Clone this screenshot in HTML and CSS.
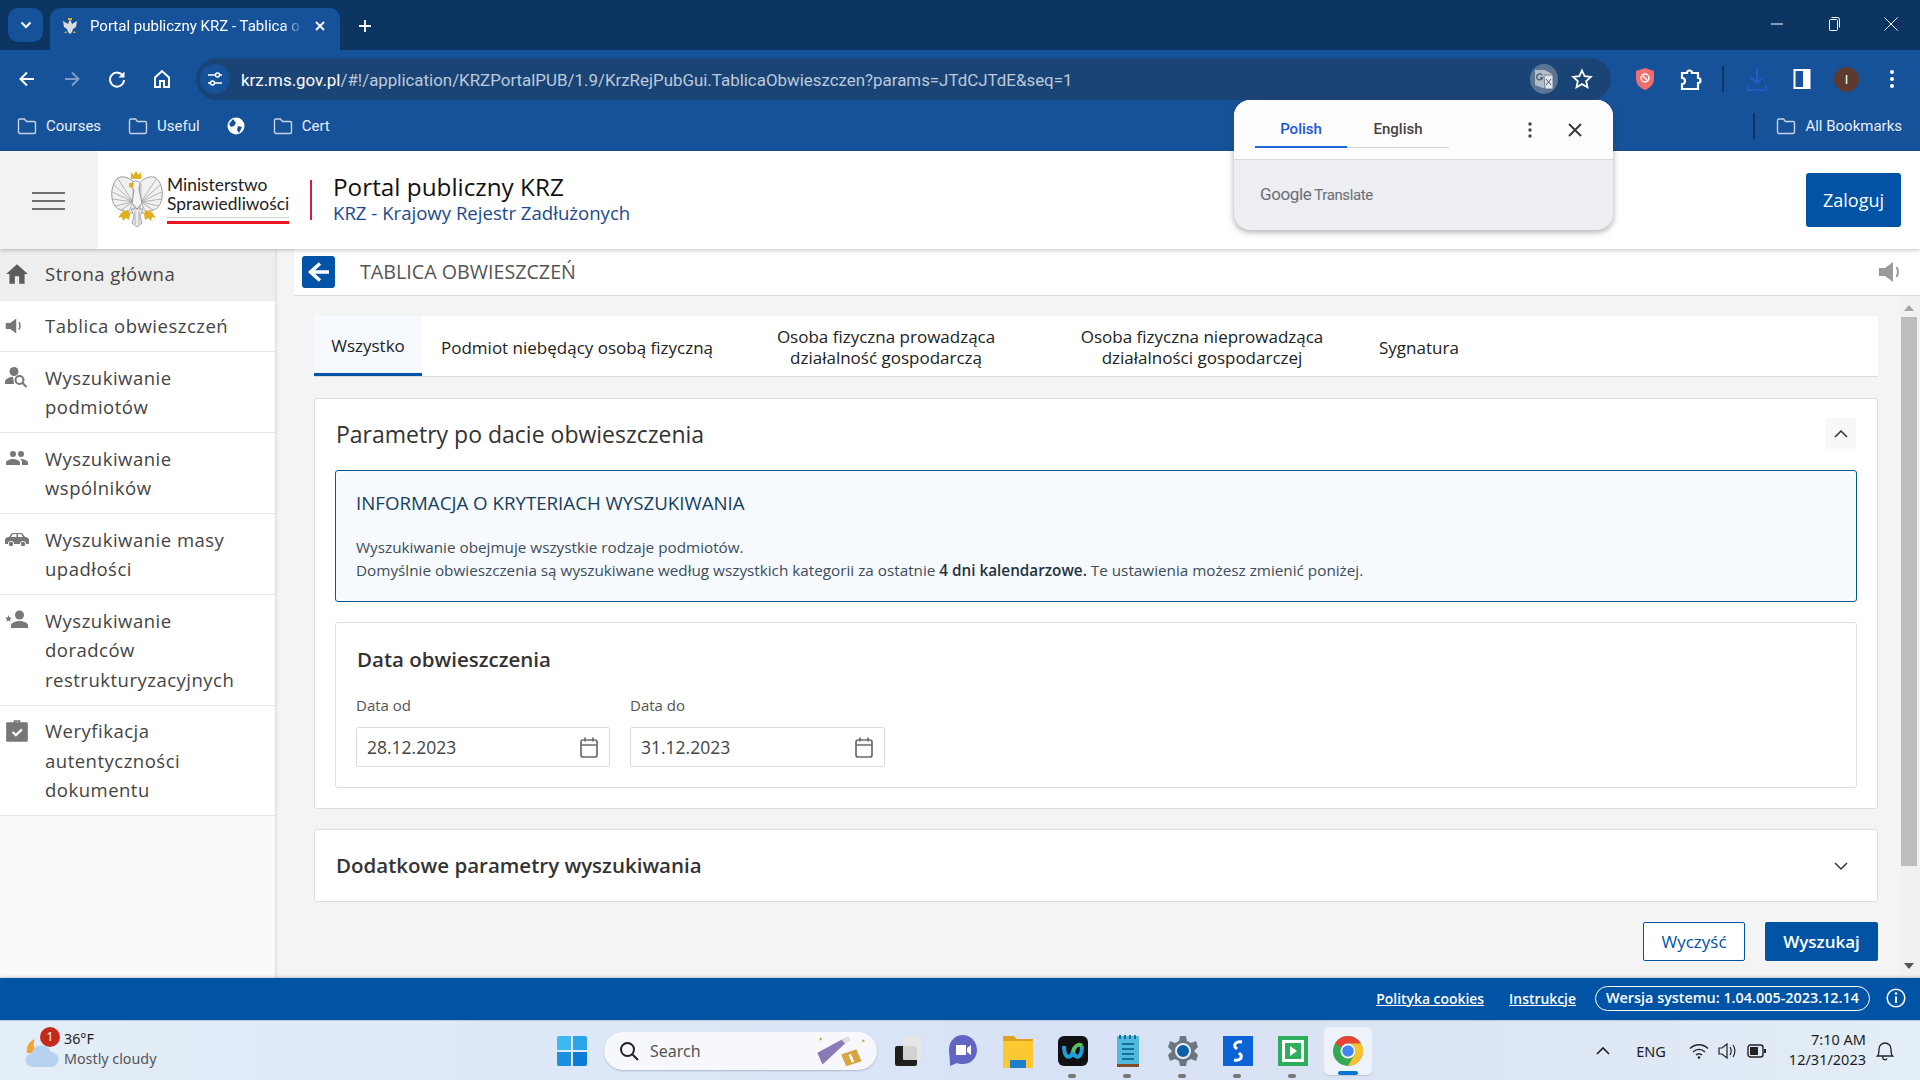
FILE: index.html
```html
<!DOCTYPE html>
<html lang="pl">
<head>
    <meta charset="UTF-8">
    <meta name="viewport" content="width=device-width, initial-scale=1.0">
    <title>Portal publiczny KRZ - Tablica obwieszczeń</title>
    <link rel="stylesheet" href="styles.css">
</head>
<body>
    <svg class="defs" width="0" height="0">
        <symbol id="folder" viewBox="0 0 20 18"><path d="M1.5 3.5A1.5 1.5 0 0 1 3 2h4.5l2 2.5H17A1.500 1.500 0 0 1 18.500 6v9a1.500 1.500 0 0 1-1.500 1.500H3A1.500 1.500 0 0 1 1.500 15z" fill="none" stroke="currentColor" stroke-width="1.4"/></symbol>
        <symbol id="speaker" viewBox="0 0 24 24"><path d="M1 8h6l8-6v20l-8-6H1z" fill="currentColor"/><path d="M18.5 7c1.800 3 1.800 7 0 10" fill="none" stroke="currentColor" stroke-width="2"/></symbol>
        <symbol id="calendar" viewBox="0 0 20 22"><path d="M2 6a2 2 0 0 1 2-2h12a2 2 0 0 1 2 2v13a2 2 0 0 1-2 2H4a2 2 0 0 1-2-2zM2 9h16M6 1.5v4M14 1.5v4" fill="none" stroke="#6b6b6b" stroke-width="1.7"/></symbol>
        <symbol id="wing" viewBox="0 0 26 44">
            <path d="M24 9C20 3 12 0 7 3 2 7 0 15 1 23c1 6 4 11 9 12l4 1 3 3 6-2z" fill="#f0f0f0" stroke="#8f8f8f" stroke-width=".9"/>
            <path d="M22 27 7 4M22 27 3 10M22 27 1.5 17M22 27 1.5 24M22 27 4 31M22 27 10 35M22 27 17 38M22 27V9" fill="none" stroke="#a3a3a3" stroke-width=".8"/>
        </symbol>
    </svg>

    <!-- browser chrome -->
    <div class="tabstrip">
        <div class="tab-search"><svg width="12" height="8" viewBox="0 0 12 8"><path d="M1.5 1.5 6 6l4.5-4.5" fill="none" stroke="#fff" stroke-width="2"/></svg></div>
        <div class="browser-tab">
            <svg class="fav" width="16" height="18" viewBox="0 0 16 18"><path d="M8 2 6 7 1 4l1 6 3 2 1 3 2 2 2-2 1-3 3-2 1-6-5 3z" fill="#dcdcdc"/><path d="M6 1h4v2H6zM4 14l-2 2h3zM12 14l2 2h-3z" fill="#e0b32c"/></svg>
            <span class="browser-tab-title">Portal publiczny KRZ - Tablica o</span>
            <svg width="12" height="12" viewBox="0 0 12 12"><path d="m2 2 8 8m0-8-8 8" stroke="#fff" stroke-width="1.8"/></svg>
        </div>
        <svg class="new-tab" width="14" height="14" viewBox="0 0 14 14"><path d="M7 1v12M1 7h12" stroke="#fff" stroke-width="1.8"/></svg>
        <div class="window-controls">
            <svg width="14" height="14" viewBox="0 0 14 14"><path d="M1 7h12" stroke="#fff"/></svg>
            <svg width="14" height="16" viewBox="0 0 14 16"><path d="M2.5 4.5a1 1 0 0 1 1-1h6a1 1 0 0 1 1 1v9a1 1 0 0 1-1 1h-6a1 1 0 0 1-1-1zM4.5 1.5h6a2 2 0 0 1 2 2v8" fill="none" stroke="#fff"/></svg>
            <svg width="14" height="14" viewBox="0 0 14 14"><path d="m.5.5 13 13m0-13-13 13" stroke="#fff"/></svg>
        </div>
    </div>

    <div class="toolbar">
        <div class="nav-buttons">
            <svg width="18" height="18" viewBox="0 0 18 18"><path d="M16 9H3m6-6.5L2.5 9 9 15.5" fill="none" stroke="#fff" stroke-width="2"/></svg>
            <svg width="18" height="18" viewBox="0 0 18 18"><path d="M2 9h13M9 2.5 15.5 9 9 15.5" fill="none" stroke="#7f9cc4" stroke-width="2"/></svg>
            <svg width="18" height="18" viewBox="0 0 18 18"><path d="M15 6a7 7 0 1 0 1 4" fill="none" stroke="#fff" stroke-width="2"/><path d="M16.5 1.5v6h-6z" fill="#fff"/></svg>
            <svg width="18" height="20" viewBox="0 0 18 20"><path d="M2 8.5 9 2l7 6.5V18h-5v-6H7v6H2z" fill="none" stroke="#fff" stroke-width="2"/></svg>
        </div>
        <div class="omnibox">
            <div class="site-chip"><svg width="16" height="16" viewBox="0 0 16 16"><path d="M1 4h7M13 4h2M1 12h2M8 12h7" stroke="#fff" stroke-width="1.5"/><circle cx="10.5" cy="4" r="2" fill="none" stroke="#fff" stroke-width="1.5"/><circle cx="5.5" cy="12" r="2" fill="none" stroke="#fff" stroke-width="1.5"/></svg></div>
            <div class="url"><span class="url-host">krz.ms.gov.pl</span>/#!/application/KRZPortalPUB/1.9/KrzRejPubGui.TablicaObwieszczen?params=JTdCJTdE&amp;seq=1</div>
            <div class="translate-chip"><svg width="20" height="22" viewBox="0 0 20 22"><path d="M1 2h10l7 4v13a1 1 0 0 1-1 1H9L1 17z" fill="#b5bdc9"/><path d="M10 7h9v14h-8z" fill="#dfe3ea" stroke="#5d6b7d" stroke-width=".8"/><path d="M8 7a3 3 0 1 0 .5 3H6" fill="none" stroke="#4e5a6b" stroke-width="1.3"/><path d="m12 11 5 6m0-6-5 6" stroke="#4e5a6b"/></svg></div>
            <svg class="star" width="22" height="22" viewBox="0 0 22 22"><path d="m11 2.5 2.6 5.7 6.200.7-4.600 4.200 1.300 6.100L11 16.100l-5.500 3.100 1.300-6.100-4.600-4.200 6.200-.7z" fill="none" stroke="#fff" stroke-width="1.8"/></svg>
        </div>
        <div class="ext-icons">
            <svg class="ext-shield" width="20" height="24" viewBox="0 0 20 24"><path d="M10 1 19 4v8c0 5-4 9-9 11-5-2-9-6-9-11V4z" fill="#f26d6d"/><circle cx="10" cy="11" r="4" fill="none" stroke="#fff" stroke-width="1.4"/><path d="m7.5 8.5 5 5" stroke="#fff" stroke-width="1.4"/></svg>
            <svg class="ext-puzzle" width="22" height="24" viewBox="0 0 22 24"><path d="M2 6h5a2.500 2.500 0 0 1 5 0h6v5a2.500 2.500 0 0 1 0 5v6H2v-5a2.500 2.500 0 0 0 0-6z" fill="none" stroke="#fff" stroke-width="2.2"/></svg>
            <span class="ext-sep"></span>
            <svg class="ext-download" width="22" height="26" viewBox="0 0 22 26"><path d="M11 2v15M4.500 11 11 17.500 17.500 11M2 19v5h18v-5" fill="none" stroke="#1d5cc0" stroke-width="2"/></svg>
            <svg class="ext-panel" width="18" height="22" viewBox="0 0 18 22"><path d="M1.5 2h15v18h-15z" fill="none" stroke="#fff" stroke-width="2"/><path d="M10 2h7v18h-7z" fill="#fff"/></svg>
            <div class="avatar">I</div>
            <svg class="ext-dots" width="6" height="20" viewBox="0 0 6 20"><circle cx="3" cy="3" r="2" fill="#fff"/><circle cx="3" cy="10" r="2" fill="#fff"/><circle cx="3" cy="17" r="2" fill="#fff"/></svg>
        </div>
    </div>

    <div class="bookmarks">
        <div class="bookmark"><svg class="bm-folder" width="20" height="18"><use href="#folder"/></svg>Courses</div>
        <div class="bookmark"><svg class="bm-folder" width="20" height="18"><use href="#folder"/></svg>Useful</div>
        <svg class="bm-globe" width="18" height="18" viewBox="0 0 18 18"><circle cx="9" cy="9" r="8.5" fill="#fff"/><path d="M6 2 9 6 7 9l-3 1-2-3zM11 9l4 1-3 6-2-3z" fill="#16529a"/></svg>
        <div class="bookmark"><svg class="bm-folder" width="20" height="18"><use href="#folder"/></svg>Cert</div>
        <span class="bm-sep"></span>
        <div class="bookmark bookmark-all"><svg class="bm-folder" width="20" height="18"><use href="#folder"/></svg>All Bookmarks</div>
    </div>

    <!-- translate popup sits over the page -->
    <div class="translate-popup">
        <div class="tp-top">
            <div class="tp-tabs">
                <span class="tp-tab tp-tab-active">Polish</span>
                <span class="tp-tab">English</span>
            </div>
            <svg class="tp-dots" width="4" height="16" viewBox="0 0 4 16"><circle cx="2" cy="2" r="1.7" fill="#444"/><circle cx="2" cy="8" r="1.7" fill="#444"/><circle cx="2" cy="14" r="1.7" fill="#444"/></svg>
            <svg class="tp-close" width="14" height="14" viewBox="0 0 14 14"><path d="m1 1 12 12m0-12L1 13" stroke="#333" stroke-width="1.8"/></svg>
        </div>
        <div class="tp-bottom"><span class="tp-google">Google</span> <span class="tp-translate">Translate</span></div>
    </div>

    <!-- app header -->
    <header class="app-header">
        <div class="menu-box">
            <span class="menu-line"></span>
            <span class="menu-line"></span>
            <span class="menu-line"></span>
        </div>
        <div class="logo">
            <svg class="eagle" width="52" height="56" viewBox="0 0 52 56">
                <use href="#wing" x="0" y="4" width="26" height="44"/>
                <use href="#wing" x="-52" y="4" width="26" height="44" transform="scale(-1 1)"/>
                <path d="M21 12c2-3 7-3 8 1l-1 5 3 14-5 6-5-6 2-13-3-4z" fill="#f4f4f4" stroke="#8f8f8f" stroke-width=".9"/>
                <path d="M20 38h12l-3 7 2 7-5 4-5-4 2-7z" fill="#ececec" stroke="#9a9a9a" stroke-width=".9"/>
                <path d="M24 40v13M28 40v13" stroke="#a3a3a3" stroke-width=".8"/>
                <path d="M20 1l2.5 3L25 0l2.5 4L30 1v7H20z" fill="#e3ae1e"/>
                <path d="M18 12h5l-1 5-4-1z" fill="#e3ae1e"/>
                <path d="M17 39l-6 2-4 6 4-1 1 4 3-3 3 2 1-6zM35 39l6 2 4 6-4-1-1 4-3-3-3 2-1-6z" fill="#e3ae1e"/>
            </svg>
            <div class="logo-side">
                <div class="logo-name">Ministerstwo<br>Sprawiedliwości</div>
                <div class="logo-rule"></div>
            </div>
        </div>
        <div class="portal-title">
            <div class="portal-name">Portal publiczny KRZ</div>
            <div class="portal-sub">KRZ - Krajowy Rejestr Zadłużonych</div>
        </div>
        <button class="btn-login">Zaloguj</button>
    </header>

    <div class="app-body">
        <nav class="sidebar">
            <a class="side-item side-item-active">
                <svg class="side-icon" width="26" height="26" viewBox="0 0 24 24"><path d="M10 21v-7h4v7h5v-9h3L12 3 2 12h3v9z" fill="#5c5c5c"/></svg>
                <span>Strona główna</span>
            </a>
            <a class="side-item">
                <svg class="side-icon side-icon-sm" width="18" height="18"><use href="#speaker"/></svg>
                <span>Tablica obwieszczeń</span>
            </a>
            <a class="side-item">
                <svg class="side-icon" width="24" height="24" viewBox="0 0 24 24"><circle cx="10" cy="6.5" r="4.5" fill="#777"/><path d="M1 19v-2c0-3 4-5 8-5l1 7z" fill="#777"/><circle cx="15.5" cy="15" r="4" fill="none" stroke="#777" stroke-width="2"/><path d="m18.5 18 4 4" stroke="#777" stroke-width="2"/></svg>
                <span>Wyszukiwanie<br>podmiotów</span>
            </a>
            <a class="side-item">
                <svg class="side-icon" width="26" height="24" viewBox="0 0 24 24"><path d="M16 11a3 3 0 1 0 0-6 3 3 0 0 0 0 6zm-8 0a3 3 0 1 0 0-6 3 3 0 0 0 0 6zm0 2c-2.300 0-7 1.200-7 3.500V19h14v-2.500c0-2.300-4.700-3.500-7-3.500zm8 0h-1c1.200.8 2 2 2 3.500V19h6v-2.500c0-2.300-4.700-3.500-7-3.500z" fill="#777"/></svg>
                <span>Wyszukiwanie<br>wspólników</span>
            </a>
            <a class="side-item">
                <svg class="side-icon" width="26" height="24" viewBox="0 0 26 24"><path d="M1 13c0-2 2-3 4-3l3-4h10l3 4c2 0 4 1 4 3v4h-3a3 3 0 0 0-6 0H10a3 3 0 0 0-6 0H1z" fill="#777"/><path d="M9 7h3.500v3H7zM14 7h3l2 3h-5z" fill="#fff"/><circle cx="7" cy="17" r="2.2" fill="#777"/><circle cx="19" cy="17" r="2.2" fill="#777"/></svg>
                <span>Wyszukiwanie masy<br>upadłości</span>
            </a>
            <a class="side-item">
                <svg class="side-icon" width="26" height="24" viewBox="0 0 26 24"><circle cx="15.5" cy="7" r="4.5" fill="#777"/><path d="M7 20v-2.5c0-3 5-4.5 8.500-4.500s8.500 1.500 8.500 4.500V20z" fill="#777"/><path d="m4.500 7 1 2.500 2.500.2-2 1.600.7 2.500-2.200-1.300-2.200 1.300.7-2.500-2-1.600 2.500-.2z" fill="#777"/></svg>
                <span>Wyszukiwanie<br>doradców<br>restrukturyzacyjnych</span>
            </a>
            <a class="side-item">
                <svg class="side-icon" width="26" height="26" viewBox="0 0 24 24"><path d="M9 4V2h6v2h6a1 1 0 0 1 1 1v16a1 1 0 0 1-1 1H3a1 1 0 0 1-1-1V5a1 1 0 0 1 1-1zm1.500 0h3V3.500h-3z" fill="#777"/><path d="m8 13 3 3 5.500-5.500" fill="none" stroke="#fff" stroke-width="2"/></svg>
                <span>Weryfikacja<br>autentyczności<br>dokumentu</span>
            </a>
        </nav>

        <main class="main">
            <div class="title-bar">
                <div class="back-btn"><svg width="24" height="22" viewBox="0 0 24 22"><path d="M22 11H5m8-8.500L3.500 11l9.500 8.500" fill="none" stroke="#fff" stroke-width="3.5"/></svg></div>
                <h1 class="page-title">TABLICA OBWIESZCZEŃ</h1>
                <svg class="title-speaker" width="24" height="24"><use href="#speaker"/></svg>
            </div>

            <div class="scroll-area">
                <div class="content">
                    <div class="tabs">
                        <div class="tab tab-active">Wszystko</div>
                        <div class="tab">Podmiot niebędący osobą fizyczną</div>
                        <div class="tab tab-wide">Osoba fizyczna prowadząca<br>działalność gospodarczą</div>
                        <div class="tab tab-wider">Osoba fizyczna nieprowadząca<br>działalności gospodarczej</div>
                        <div class="tab tab-last">Sygnatura</div>
                    </div>

                    <section class="card">
                        <div class="card-head">
                            <h2>Parametry po dacie obwieszczenia</h2>
                            <div class="chevron-box"><svg width="14" height="9" viewBox="0 0 14 9"><path d="m1 8 6-6 6 6" fill="none" stroke="#333" stroke-width="1.5"/></svg></div>
                        </div>
                        <div class="info-box">
                            <h3>INFORMACJA O KRYTERIACH WYSZUKIWANIA</h3>
                            <p>Wyszukiwanie obejmuje wszystkie rodzaje podmiotów.<br>Domyślnie obwieszczenia są wyszukiwane według wszystkich kategorii za ostatnie <strong>4 dni kalendarzowe.</strong> Te ustawienia możesz zmienić poniżej.</p>
                        </div>
                        <div class="date-box">
                            <h4>Data obwieszczenia</h4>
                            <div class="date-fields">
                                <div class="field">
                                    <label>Data od</label>
                                    <div class="date-input">28.12.2023<svg width="20" height="22"><use href="#calendar"/></svg></div>
                                </div>
                                <div class="field">
                                    <label>Data do</label>
                                    <div class="date-input">31.12.2023<svg width="20" height="22"><use href="#calendar"/></svg></div>
                                </div>
                            </div>
                        </div>
                    </section>

                    <section class="card card-closed">
                        <h2>Dodatkowe parametry wyszukiwania</h2>
                        <svg width="14" height="9" viewBox="0 0 14 9"><path d="m1 1 6 6 6-6" fill="none" stroke="#333" stroke-width="1.5"/></svg>
                    </section>

                    <div class="actions">
                        <button class="btn btn-outline">Wyczyść</button>
                        <button class="btn btn-primary">Wyszukaj</button>
                    </div>
                </div>
                <div class="scrollbar">
                    <span class="arrow-up"></span>
                    <span class="thumb"></span>
                    <span class="arrow-down"></span>
                </div>
            </div>
        </main>
    </div>

    <footer class="app-footer">
        <a class="foot-link">Polityka cookies</a>
        <a class="foot-link">Instrukcje</a>
        <span class="version">Wersja systemu: 1.04.005-2023.12.14</span>
        <svg width="20" height="20" viewBox="0 0 20 20"><circle cx="10" cy="10" r="8.8" fill="none" stroke="#fff" stroke-width="1.6"/><path d="M10 8.500V15" stroke="#fff" stroke-width="2"/><circle cx="10" cy="5.5" r="1.3" fill="#fff"/></svg>
    </footer>

    <!-- windows taskbar -->
    <div class="taskbar">
        <div class="weather">
            <div class="weather-icon">
                <svg width="34" height="38" viewBox="0 0 34 38"><path d="M10 8a10 10 0 0 0 4 14H2A12 12 0 0 1 10 8z" fill="#f2a431"/><path d="M8 36a7 7 0 0 1-1-14 10 10 0 0 1 19-1 7.500 7.500 0 0 1 0 15z" fill="#b7d2f0"/></svg>
                <span class="weather-badge">1</span>
            </div>
            <div class="weather-text">
                <div>36°F</div>
                <div class="weather-desc">Mostly cloudy</div>
            </div>
        </div>
        <svg class="win-logo" width="30" height="30" viewBox="0 0 30 30"><path d="M0 2a2 2 0 0 1 2-2h12v14H0z" fill="#3fb7f0"/><path d="M16 0h12a2 2 0 0 1 2 2v12H16z" fill="#2aa5ea"/><path d="M0 16h14v14H2a2 2 0 0 1-2-2z" fill="#1b8fe0"/><path d="M16 16h14v12a2 2 0 0 1-2 2H16z" fill="#0e7cd6"/></svg>
        <div class="task-search">
            <svg width="20" height="20" viewBox="0 0 20 20"><circle cx="8.5" cy="8.5" r="6.5" fill="none" stroke="#222" stroke-width="2"/><path d="m13 13 6 6" stroke="#222" stroke-width="2"/></svg>
            <span>Search</span>
            <svg class="candy" width="62" height="34" viewBox="0 0 62 40"><path d="M2 22 32 6l3 5L8 36z" fill="#8b7ab8"/><path d="M30 6l9-3 2 5-7 3z" fill="#ddd"/><path d="M30 24l18-6 6 14-18 6z" fill="#d8a544"/><path d="m40 24 4 9" stroke="#fff" stroke-width="3"/><circle cx="6" cy="6" r="1.5" fill="#d8a544"/><circle cx="56" cy="8" r="1.5" fill="#d8a544"/></svg>
        </div>
        <div class="task-app"><svg width="26" height="30" viewBox="0 0 26 30"><rect y="10" width="22" height="20" rx="2" fill="#1f1f1f"/><rect x="8" width="18" height="24" rx="1" fill="#e6e6e6" opacity=".9"/></svg></div>
        <div class="task-app"><svg width="30" height="34" viewBox="0 0 30 34"><path d="M15 1C7 1 1 7 1 16c0 4 1 8 1 16l7-3c2 1 4 1 6 1 8 0 14-6 14-14S23 1 15 1z" fill="#6264c4"/><path d="M8 11h10v10H8zM19 14l4-3v10l-4-3z" fill="#fff"/></svg></div>
        <div class="task-app"><svg width="30" height="34" viewBox="0 0 30 34"><path d="M0 2h11l3 3h16v4H0z" fill="#e0a020"/><path d="M0 7h30v27H0z" fill="#fcc933"/><rect x="7" y="26" width="16" height="8" rx="1" fill="#1b7fcc"/></svg></div>
        <div class="task-app task-running"><svg width="30" height="30" viewBox="0 0 30 30"><rect width="30" height="30" rx="6" fill="#111"/><path d="M6 10c0 12 6 14 9 6 3 8 9 6 9-6" fill="none" stroke="#1f9fd8" stroke-width="4"/><path d="M15 16c2-8 7-8 9-6" fill="none" stroke="#58c25a" stroke-width="4"/></svg></div>
        <div class="task-app task-running"><svg width="22" height="32" viewBox="0 0 22 32"><rect y="1" width="22" height="31" rx="1" fill="#53b9dc"/><path d="M0 29h22v3H0z" fill="#80502a"/><path d="M5 9h12M5 14h12M5 19h12M5 24h12" stroke="#166f96" stroke-width="2"/><path d="M3 0v4M8 0v4M13 0v4M18 0v4" stroke="#166f96" stroke-width="2"/></svg></div>
        <div class="task-app task-running"><svg width="30" height="30" viewBox="0 0 30 30"><path d="M12 0h6l1 5 4 2 5-2 2 6-4 4 4 4-2 6-5-2-4 2-1 5h-6l-1-5-4-2-5 2-2-6 4-4-4-4 2-6 5 2 4-2z" fill="#6c7680"/><circle cx="15" cy="15" r="7" fill="#0d5fa8" stroke="#e9eef5" stroke-width="2"/></svg></div>
        <div class="task-app task-running"><svg width="30" height="30" viewBox="0 0 30 30"><rect width="30" height="30" fill="#0b63d6"/><path d="M19 6c-6-1-8 2-7 5l2 2M11 24c6 1 8-2 7-5l-2-2" fill="none" stroke="#fff" stroke-width="3"/></svg></div>
        <div class="task-app task-running"><svg width="30" height="30" viewBox="0 0 30 30"><rect width="30" height="30" fill="#2ead5c"/><rect x="4" y="4" width="22" height="22" fill="#fff"/><rect x="7" y="7" width="16" height="16" fill="#2ead5c"/><path d="M12 10v10l7-5z" fill="#fff"/></svg></div>
        <div class="task-app task-chrome">
            <svg width="30" height="30" viewBox="0 0 30 30"><circle cx="15" cy="15" r="15" fill="#34a853"/><path d="M15 0a15 15 0 0 1 13 7.500H15a7.500 7.500 0 0 0-6.500 3.750L2 7.500A15 15 0 0 1 15 0z" fill="#ea4335"/><path d="M28 7.500A15 15 0 0 1 15 30l6.500-11.250A7.500 7.500 0 0 0 15 7.500z" fill="#fbc02d"/><circle cx="15" cy="15" r="7.5" fill="#fff"/><circle cx="15" cy="15" r="5.8" fill="#4285f4"/></svg>
            <span class="chrome-bar"></span>
        </div>
        <div class="tray">
            <svg class="tray-caret" width="14" height="9" viewBox="0 0 14 9"><path d="m1 8 6-6 6 6" fill="none" stroke="#222" stroke-width="1.6"/></svg>
            <span class="tray-lang">ENG</span>
            <svg width="20" height="16" viewBox="0 0 20 16"><path d="M1 5.500c5-5 13-5 18 0M4 9c3.500-3.500 8.500-3.500 12 0M7 12c1.700-1.500 4.300-1.500 6 0" fill="none" stroke="#222" stroke-width="1.4"/><circle cx="10" cy="14.5" r="1.3" fill="#222"/></svg>
            <svg width="20" height="18" viewBox="0 0 20 18"><path d="M1 6h3l5-4v14l-5-4H1zM12 5c1.500 2.500 1.500 5.500 0 8M15 3c2.500 3.500 2.500 8.500 0 12" fill="none" stroke="#222" stroke-width="1.2"/></svg>
            <svg width="20" height="14" viewBox="0 0 20 14"><rect x="1" y="1" width="15" height="12" rx="2.5" fill="none" stroke="#222" stroke-width="1.4"/><rect x="3" y="3" width="8" height="8" fill="#222"/><rect x="17" y="5" width="2" height="4" fill="#222"/></svg>
            <div class="clock">7:10 AM<br>12/31/2023</div>
            <svg width="18" height="20" viewBox="0 0 18 20"><path d="M1.500 15c1.500-1.500 1.500-3 1.500-7a6 6 0 0 1 12 0c0 4 0 5.500 1.500 7zM7 15.500a2 2 0 0 0 4 2" fill="none" stroke="#222" stroke-width="1.3"/></svg>
        </div>
    </div>
</body>
</html>
```

FILE: styles.css
```css
* {
    box-sizing: border-box;
}

html, body {
    margin: 0;
    padding: 0;
    height: 100%;
}

body {
    width: 1920px;
    height: 1080px;
    display: flex;
    flex-direction: column;
    overflow: hidden;
    position: relative;
    font-family: "Open Sans", sans-serif;
    color: #333;
    background: #f4f4f4;
}

.defs {
    position: absolute;
}

h1, h2, h3, h4, p {
    margin: 0;
}

svg {
    flex: none;
}

/* browser chrome */
.tabstrip {
    height: 50px;
    flex: none;
    display: flex;
    align-items: flex-end;
    background: #0d3562;
    font-family: Roboto, sans-serif;
}

.tab-search {
    width: 35px;
    height: 34px;
    margin: 0 7px 8px 8px;
    border-radius: 10px;
    background: #16529a;
    display: flex;
    align-items: center;
    justify-content: center;
}

.browser-tab {
    width: 290px;
    height: 42px;
    padding: 0 14px 6px 12px;
    display: flex;
    align-items: center;
    border-radius: 10px 10px 0 0;
    background: #16529a;
    color: #fff;
    font-size: 15px;
}

.fav {
    margin-right: 12px;
}

.browser-tab-title {
    flex: 1;
    overflow: hidden;
    white-space: nowrap;
    -webkit-mask-image: linear-gradient(90deg, #000 86%, rgba(0, 0, 0, 0.15) 94%);
    mask-image: linear-gradient(90deg, #000 86%, rgba(0, 0, 0, 0.15) 94%);
}

.new-tab {
    margin: 0 0 17px 18px;
}

.window-controls {
    margin-left: auto;
    width: 150px;
    height: 50px;
    padding: 0 22px 2px 0;
    display: flex;
    align-items: center;
    justify-content: space-between;
}

.toolbar {
    height: 50px;
    flex: none;
    display: flex;
    align-items: flex-start;
    padding-top: 8px;
    background: #16529a;
    font-family: Roboto, sans-serif;
}

.nav-buttons {
    width: 196px;
    height: 42px;
    padding: 0 25px 0 18px;
    display: flex;
    align-items: center;
    justify-content: space-between;
}

.omnibox {
    width: 1415px;
    height: 42px;
    display: flex;
    align-items: center;
    border-radius: 21px;
    background: #1b4476;
    padding: 0 18px 0 4px;
    color: #bcc9da;
    font-size: 16.9px;
}

.site-chip {
    width: 30px;
    height: 30px;
    margin-right: 11px;
    border-radius: 50%;
    background: #16529a;
    display: flex;
    align-items: center;
    justify-content: center;
}

.url {
    flex: 1;
    white-space: nowrap;
    padding-top: 1px;
}

.url-host {
    color: #fff;
}

.translate-chip {
    width: 28px;
    height: 30px;
    margin-right: 13px;
    border-radius: 50%;
    background: #5b7694;
    display: flex;
    align-items: center;
    justify-content: center;
}

.ext-icons {
    flex: 1;
    height: 42px;
    padding-left: 24px;
    display: flex;
    align-items: center;
}

.ext-puzzle {
    margin-left: 25px;
}

.ext-sep {
    width: 2px;
    height: 26px;
    margin-left: 20px;
    background: #0d3562;
}

.ext-download {
    margin-left: 22px;
}

.ext-panel {
    margin-left: 25px;
}

.avatar {
    width: 25px;
    height: 25px;
    margin-left: 23px;
    border-radius: 50%;
    background: #5c3a2e;
    color: #fff;
    font-size: 13px;
    line-height: 25px;
    text-align: center;
}

.ext-dots {
    margin-left: 30px;
}

.bookmarks {
    height: 51px;
    flex: none;
    display: flex;
    align-items: center;
    padding: 0 18px 0 17px;
    background: #16529a;
    color: #fff;
    font-family: Roboto, sans-serif;
    font-size: 15px;
}

.bookmark {
    display: flex;
    align-items: center;
    margin-right: 27px;
    color: #e8eef6;
}

.bm-folder {
    margin-right: 9px;
    color: #c9d3e0;
}

.bm-globe {
    margin-right: 28px;
}

.bm-sep {
    width: 2px;
    height: 26px;
    margin: 0 21px 0 auto;
    background: #0d3562;
}

.bookmark-all {
    margin-right: 0;
}

/* translate popup */
.translate-popup {
    position: absolute;
    left: 1234px;
    top: 100px;
    width: 379px;
    height: 130px;
    z-index: 5;
    border-radius: 16px;
    overflow: hidden;
    background: #eceef2;
    box-shadow: 0 2px 6px rgba(60, 64, 67, 0.45);
    font-family: Roboto, sans-serif;
}

.tp-top {
    height: 60px;
    display: flex;
    align-items: center;
    padding-right: 31px;
    background: #fdfcff;
    border-bottom: 1px solid #d6d8dc;
}

.tp-tabs {
    display: flex;
    margin-left: 21px;
    border-bottom: 1px solid #d2d4d8;
    height: 49px;
    margin-top: -1px;
    align-self: flex-end;
    margin-bottom: 11px;
}

.tp-tab {
    width: 102px;
    padding-top: 6px;
    line-height: 48px;
    text-align: center;
    font-size: 15px;
    font-weight: 500;
    color: #444;
}

.tp-tab-active {
    width: 92px;
    height: 49px;
    border-bottom: 2px solid #1a66d9;
    color: #1a56d6;
}

.tp-dots {
    margin-left: auto;
}

.tp-close {
    margin-left: 36px;
}

.tp-bottom {
    padding: 24px 0 0 26px;
    color: #6a6d72;
    font-size: 15px;
    letter-spacing: -0.4px;
}

.tp-google {
    font-size: 17px;
}

/* app header */
.app-header {
    height: 98px;
    flex: none;
    display: flex;
    align-items: center;
    background: #fff;
    box-shadow: 0 1px 4px rgba(0, 0, 0, 0.25);
    position: relative;
    z-index: 2;
}

.menu-box {
    width: 98px;
    height: 100%;
    padding: 41px 33px 0 32px;
    background: #f2f2f2;
}

.menu-line {
    display: block;
    height: 2px;
    margin-bottom: 6px;
    background: #6e6e6e;
}

.logo {
    display: flex;
    align-items: flex-start;
    width: 212px;
    height: 60px;
    padding: 3px 0 0 13px;
    font-family: Lato, sans-serif;
}

.eagle {
    margin-top: -2px;
}

.logo-side {
    margin-left: 4px;
    margin-top: 2px;
    width: 122px;
}

.logo-name {
    font-size: 17.4px;
    line-height: 19px;
    color: #222;
    white-space: nowrap;
}

.logo-rule {
    height: 7px;
    margin-top: 4px;
    border-top: 1px solid #cfcfcf;
    border-bottom: 3px solid #e8141f;
}

.portal-title {
    align-self: center;
    margin-bottom: 1px;
    padding-left: 21px;
    border-left: 2px solid #d81e3a;
    height: 40px;
    display: flex;
    flex-direction: column;
    justify-content: center;
}

.portal-name {
    font-size: 24.3px;
    line-height: 30px;
    color: #111;
    margin-top: -8px;
}

.portal-sub {
    font-size: 18.6px;
    line-height: 22px;
    font-weight: 500;
    color: #1d4a8e;
    margin-bottom: -4px;
}

.btn-login {
    width: 95px;
    height: 54px;
    margin-left: auto;
    margin-right: 19px;
    margin-bottom: 1px;
    border: 0;
    border-radius: 3px;
    background: #0053a5;
    color: #fff;
    font-family: "Open Sans", sans-serif;
    font-size: 18px;
}

/* sidebar */
.app-body {
    height: 729px;
    flex: none;
    display: flex;
}

.sidebar {
    width: 275px;
    background: #fafafa;
    box-shadow: 1px 0 3px rgba(0, 0, 0, 0.12);
    position: relative;
    padding-top: 1px;
}

.side-item {
    display: grid;
    grid-template-columns: 45px 1fr;
    align-items: start;
    padding: 10.5px 0;
    background: #fff;
    border-bottom: 1px solid #e6e6e6;
    font-size: 18.5px;
    line-height: 29.5px;
    letter-spacing: 0.5px;
    color: #444;
}

.side-item span {
    white-space: nowrap;
}

.side-item-active {
    margin-top: -1px;
    padding: 9.5px 0 12.5px;
    background: #eee;
    border-bottom: 0;
}

.side-icon {
    margin: 2px 0 0 4px;
    color: #777;
}

.side-icon-sm {
    margin: 6px 0 0 5px;
}

/* main */
.main {
    flex: 1;
    margin-left: 19px;
    display: flex;
    flex-direction: column;
}

.title-bar {
    height: 47px;
    flex: none;
    display: flex;
    align-items: center;
    padding: 0 18px 0 8px;
    background: #fff;
    border-bottom: 1px solid #ddd;
}

.back-btn {
    width: 33px;
    height: 32px;
    margin-top: -1px;
    border-radius: 3px;
    background: #0053a5;
    display: flex;
    align-items: center;
    justify-content: center;
}

.page-title {
    margin: 0 0 1px 25px;
    font-size: 19.7px;
    font-weight: 400;
    color: #555;
}

.title-speaker {
    margin-left: auto;
    color: #9b9b9b;
}

.scroll-area {
    flex: 1;
    display: flex;
    min-height: 0;
}

.content {
    flex: 1;
    padding: 20px 22px 0 20px;
}

.scrollbar {
    width: 20px;
    padding: 0 3px 0 1px;
    display: flex;
    flex-direction: column;
    align-items: center;
    background: #f1f1f1;
}

.thumb {
    width: 16px;
    height: 549px;
    margin-top: 6px;
    background: #bdbdbd;
}

.arrow-up, .arrow-down {
    width: 0;
    height: 0;
    border-left: 5px solid transparent;
    border-right: 5px solid transparent;
}

.arrow-up {
    margin-top: 9px;
    border-bottom: 6px solid #a5a5a5;
}

.arrow-down {
    margin-top: auto;
    margin-bottom: 9px;
    border-top: 6px solid #555;
}

.tabs {
    height: 61px;
    display: flex;
    background: #fff;
    border-bottom: 1px solid #ddd;
    font-size: 17px;
    line-height: 21px;
    font-weight: 500;
    color: #222;
}

.tab {
    height: 60px;
    padding: 2px 19px 0;
    display: flex;
    align-items: center;
    justify-content: center;
    text-align: center;
    white-space: nowrap;
}

.tab-active {
    width: 108px;
    padding: 1px 0 0;
    background: #f6fafe;
    border-bottom: 3px solid #0053a5;
}

.tab-wide {
    width: 308px;
}

.tab-wider {
    width: 324px;
}

.tab-last {
    padding-left: 15px;
    padding-right: 0;
}

.card {
    margin-top: 21px;
    padding: 0 20px 20px;
    height: 411px;
    background: #fff;
    border: 1px solid #ddd;
    border-radius: 3px;
}

.card-head {
    height: 71px;
    display: flex;
    align-items: center;
    justify-content: space-between;
    padding-bottom: 2px;
}

.card h2 {
    margin-left: 1px;
    font-size: 23px;
    font-weight: 500;
    color: #333;
}

.chevron-box {
    width: 31px;
    height: 31px;
    margin-right: 1px;
    background: #f6f8fa;
    display: flex;
    align-items: center;
    justify-content: center;
}

.info-box {
    height: 132px;
    padding: 20px 20px 0;
    background: #f6fafe;
    border: 1px solid #005a8e;
    border-radius: 3px;
}

.info-box h3 {
    font-size: 18.7px;
    line-height: 24px;
    font-weight: 500;
    color: #163f5e;
}

.info-box p {
    margin-top: 21px;
    font-size: 15.28px;
    line-height: 23px;
    color: #3d4c59;
}

.info-box strong {
    font-weight: 600;
    color: #22333f;
}

.date-box {
    height: 166px;
    margin-top: 20px;
    padding: 24px 20px 0;
    border: 1px solid #ddd;
    border-radius: 3px;
}

.date-box h4 {
    margin-left: 1px;
    font-size: 20.5px;
    line-height: 24px;
    font-weight: 600;
    color: #333;
}

.date-fields {
    display: flex;
    gap: 20px;
    margin-top: 24px;
}

.field {
    width: 254px;
}

.field + .field {
    width: 255px;
}

.field label {
    display: block;
    margin-bottom: 12px;
    font-size: 15px;
    line-height: 20px;
    color: #555;
}

.date-input {
    height: 40px;
    padding: 0 10px;
    display: flex;
    align-items: center;
    justify-content: space-between;
    border: 1px solid #ddd;
    border-radius: 2px;
    font-size: 17.5px;
    color: #444;
}

.card-closed {
    height: 73px;
    margin-top: 20px;
    padding: 0 29px 2px 20px;
    display: flex;
    align-items: center;
    justify-content: space-between;
}

.card-closed h2 {
    font-size: 20.5px;
    font-weight: 600;
}

.card-closed svg {
    margin-top: 4px;
}

.actions {
    display: flex;
    justify-content: flex-end;
    gap: 20px;
    margin-top: 20px;
}

.btn {
    height: 39px;
    border-radius: 2px;
    font-family: "Open Sans", sans-serif;
    font-size: 17px;
}

.btn-outline {
    width: 102px;
    background: #fff;
    border: 1px solid #0053a5;
    color: #0053a5;
}

.btn-primary {
    width: 113px;
    border: 0;
    background: #0053a5;
    color: #fff;
    font-weight: 600;
}

/* footer */
.app-footer {
    height: 42px;
    flex: none;
    display: flex;
    align-items: center;
    padding: 0 14px 2px 0;
    background: #0053a5;
    color: #fff;
    font-size: 14.4px;
    font-weight: 600;
    position: relative;
    z-index: 1;
    box-shadow: 0 -1px 3px rgba(0, 0, 0, 0.2);
}

.foot-link {
    font-size: 13.9px;
    text-decoration: underline;
    margin-right: 25px;
}

.foot-link:first-child {
    margin-left: auto;
}

.version {
    height: 25px;
    padding: 0 10px;
    margin: 0 16px 0 -6px;
    line-height: 22px;
    border: 1px solid #fff;
    border-radius: 13px;
    white-space: nowrap;
}

/* taskbar */
.taskbar {
    flex: 1;
    display: flex;
    align-items: center;
    border-top: 1px solid #c9d2de;
    background: linear-gradient(90deg, #e4eef7 0%, #dde8f8 30%, #d8e2f6 55%, #dbe4f3 75%, #e4eef7 100%);
    font-family: "Noto Sans", sans-serif;
    color: #1d1d1d;
}

.weather {
    width: 557px;
    padding-left: 25px;
    display: flex;
    align-items: center;
    font-size: 14.3px;
    line-height: 20px;
}

.weather-text {
    margin-bottom: 3px;
}

.weather-icon {
    width: 39px;
    height: 40px;
    position: relative;
}

.weather-badge {
    position: absolute;
    left: 15px;
    top: -4px;
    width: 20px;
    height: 20px;
    border-radius: 50%;
    background: #c42b1c;
    color: #fff;
    font-size: 12px;
    line-height: 20px;
    text-align: center;
}

.weather-desc {
    color: #555;
}

.win-logo {
    margin-right: 17px;
}

.task-search {
    width: 273px;
    height: 38px;
    flex: none;
    padding: 0 4px 0 15px;
    display: flex;
    align-items: center;
    gap: 11px;
    margin-right: 3px;
    border-radius: 19px;
    background: #f6f8fd;
    box-shadow: 0 1px 2px rgba(0, 0, 0, 0.2);
    font-size: 16px;
    color: #555;
}

.candy {
    margin-left: auto;
}

.task-app {
    width: 55px;
    height: 59px;
    flex: none;
    display: flex;
    align-items: center;
    justify-content: center;
    position: relative;
}

.task-running::after {
    content: "";
    position: absolute;
    left: 23px;
    bottom: 2px;
    width: 8px;
    height: 4px;
    border-radius: 2px;
    background: #777;
}

.task-chrome {
    width: 48px;
    height: 48px;
    margin: 0 3.5px;
    border-radius: 5px;
    background: #eef2fa;
    box-shadow: 0 1px 1px rgba(0, 0, 0, 0.12);
}

.chrome-bar {
    position: absolute;
    left: 14px;
    bottom: 0;
    width: 20px;
    height: 4px;
    border-radius: 2px;
    background: #0a74d6;
}

.tray {
    flex: 1;
    padding-right: 26px;
    display: flex;
    align-items: center;
    justify-content: flex-end;
    font-size: 14.5px;
}

.tray-caret {
    margin-right: 26px;
}

.tray-lang {
    margin-right: 23px;
}

.tray svg + svg {
    margin-left: 9px;
}

.clock {
    margin: 0 10px 3px 22px;
    text-align: right;
    line-height: 20px;
    white-space: nowrap;
}
```
